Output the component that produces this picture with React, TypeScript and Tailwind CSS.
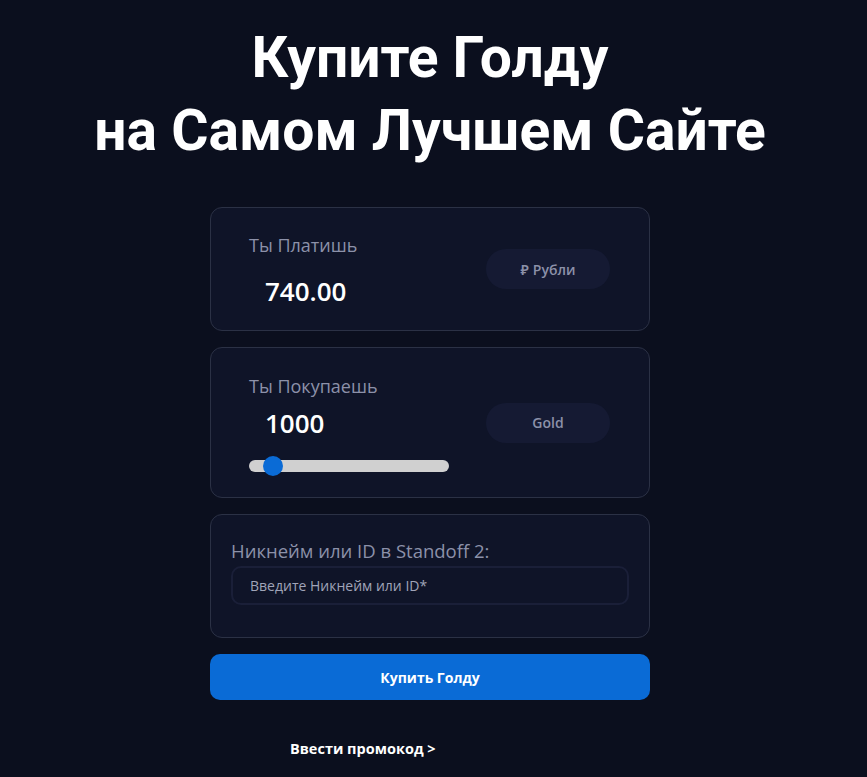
import React, { useState } from 'react';

const body = { fontFamily: '"Open Sans", "Noto Sans", sans-serif' };

const App: React.FC = () => {
  const [amount] = useState<number>(1000);
  const [nick, setNick] = useState<string>('');
  const price = (amount * 0.74).toFixed(2);
  const percent = 12;

  return (
    <div className="min-h-[777px] w-full bg-[#0b0f1e] flex flex-col items-center pt-[21px] pb-6 pr-[7px]" style={body}>
      <h1
        className="text-white text-[57px] leading-[73px] font-bold text-center"
        style={{ fontFamily: 'Roboto, "Liberation Sans", Arial, sans-serif' }}
      >
        Купите Голду
        <br />
        на Самом Лучшем Сайте
      </h1>

      <div className="w-[440px] mt-[40px] flex flex-col gap-4">
        {/* You pay */}
        <div className="h-[124px] rounded-xl border border-[#2b3145] bg-[#0f1428] flex items-center justify-between pl-[38px] pr-[39px]">
          <div className="flex flex-col">
            <span className="text-[18px] leading-[26px] text-[#8c91a9]">Ты Платишь</span>
            <span className="text-[26px] leading-[32px] font-semibold text-white pl-4 mt-[17px]">{price}</span>
          </div>
          <div className="w-[124px] h-10 rounded-full bg-[#151a33] flex items-center justify-center gap-1 text-[14px] font-semibold text-[#8c91a9]">
            <span>₽</span>
            <span>Рубли</span>
          </div>
        </div>

        {/* You buy */}
        <div className="h-[151px] rounded-xl border border-[#2b3145] bg-[#0f1428] flex items-center justify-between pl-[38px] pr-[39px]">
          <div className="flex flex-col">
            <span className="text-[18px] leading-[26px] text-[#8c91a9]">Ты Покупаешь</span>
            <span className="text-[26px] leading-[32px] font-semibold text-white pl-4 mt-[8px]">{amount}</span>
            <div className="relative w-[200px] h-3 mt-[21px] rounded-full bg-[#d0d0d0]">
              <div
                className="absolute top-1/2 -translate-y-1/2 -translate-x-1/2 w-5 h-5 rounded-full bg-[#0a6bd6]"
                style={{ left: `${percent}%` }}
              />
            </div>
          </div>
          <div className="w-[124px] h-10 rounded-full bg-[#151a33] flex items-center justify-center text-[14px] font-semibold text-[#8c91a9]">
            Gold
          </div>
        </div>

        {/* Nickname */}
        <div className="h-[124px] rounded-xl border border-[#2b3145] bg-[#0f1428] flex flex-col px-5 pt-[23px]">
          <label className="text-[18.5px] leading-[26px] text-[#8c91a9]">Никнейм или ID в Standoff 2:</label>
          <input
            value={nick}
            onChange={(e) => setNick(e.target.value)}
            placeholder="Введите Никнейм или ID*"
            className="mt-[2px] h-[39px] w-full rounded-[10px] border-2 border-[#1a1f38] bg-[#0f1428] px-[17px] text-[14px] text-white placeholder:text-[#a0a4b8] outline-none"
          />
        </div>

        <button className="h-[46px] w-full rounded-[10px] bg-[#0a6bd6] text-white text-[14px] font-bold">
          Купить Голду
        </button>
      </div>

      <div className="w-[440px] mt-[36px] pl-[80px]">
        <span className="text-white text-[14.5px] font-bold">Ввести промокод &gt;</span>
      </div>
    </div>
  );
};

export default App;
